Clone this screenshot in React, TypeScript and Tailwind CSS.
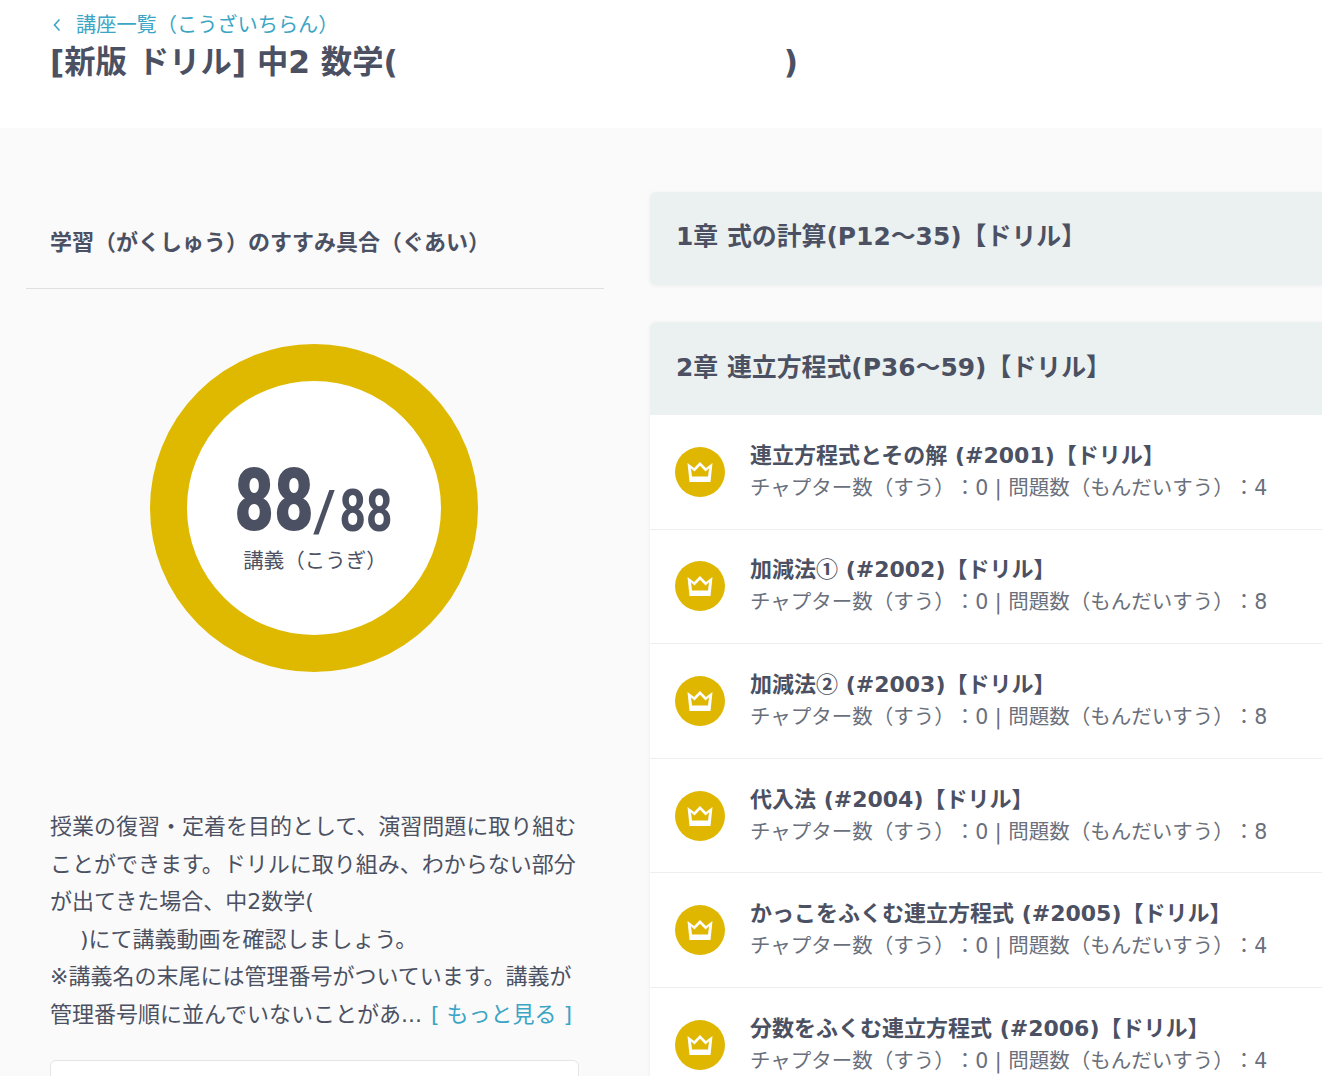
import type { ReactNode } from "react"

const circled = (n: string) => <span className="leading-[0] font-['Noto_Sans_CJK_JP',sans-serif]">{n}</span>

const lectures: { id: number; title: ReactNode; count: number }[] = [
  { id: 2001, title: "連立方程式とその解 (#2001)【ドリル】", count: 4 },
  { id: 2002, title: <>加減法{circled("①")} (#2002)【ドリル】</>, count: 8 },
  { id: 2003, title: <>加減法{circled("②")} (#2003)【ドリル】</>, count: 8 },
  { id: 2004, title: "代入法 (#2004)【ドリル】", count: 8 },
  { id: 2005, title: "かっこをふくむ連立方程式 (#2005)【ドリル】", count: 4 },
  { id: 2006, title: "分数をふくむ連立方程式 (#2006)【ドリル】", count: 4 },
]

function CrownBadge() {
  return (
    <div className="w-[50px] h-[50px] rounded-full bg-[#dfb600] flex items-center justify-center shrink-0">
      <svg width="26" height="20" viewBox="0 0 26 20">
        <path
          fillRule="evenodd"
          fill="#fff"
          d="M0.5 1 L7 6 L13 0 L19 6 L25.5 1 L23.5 20 H2.5 Z M4 6.2 L5 14.5 H21 L22 6.2 L18.5 9.5 L13 3.8 L7.5 9.5 Z"
        />
      </svg>
    </div>
  )
}

export default function App() {
  return (
    <div className="h-[1076px] overflow-hidden bg-[#fafafa] text-[#4b5162] [text-spacing-trim:space-all] font-['DejaVu_Sans','Noto_Sans_CJK_JP',sans-serif]">
      {/* Header */}
      <header className="h-[128px] bg-white pl-[50px] pt-[10px]">
        <a className="flex items-center text-[20.2px] leading-[30px] text-[#3ba5c5]">
          <svg width="14" height="16" viewBox="0 0 14 16" className="mr-[12px]">
            <path d="M9.5 2.5 L4.5 8 L9.5 13.5" fill="none" stroke="#3ba5c5" strokeWidth="1.6" />
          </svg>
          講座一覧（こうざいちらん）
        </a>
        <h1 className="flex text-[31.3px] leading-[44px] font-bold">
          <span>[新版 ドリル] 中2 数学(</span>
          <span className="ml-[386px]">)</span>
        </h1>
      </header>

      <div className="flex">
        {/* Left column */}
        <aside className="w-[650px] shrink-0 pl-[26px] pr-[46px]">
          <div className="h-[161px] pt-[98px] pl-[24px] border-b border-[#dfe0e0]">
            <h2 className="text-[22px] leading-[34px] font-bold">学習（がくしゅう）のすすみ具合（ぐあい）</h2>
          </div>

          <div className="mt-[55px] ml-[124px] w-[328px] h-[328px] rounded-full border-[37px] border-[#dfb900] bg-white flex flex-col items-center">
            <div className="flex items-end h-[92px] mt-[73px] font-['Roboto',sans-serif] font-black">
              <span className="flex justify-center w-[78px] text-[88px] leading-[92px] scale-x-[0.78]">88</span>
              <span className="flex justify-center w-[20px] ml-[2px] text-[58px] leading-[70px] font-medium">/</span>
              <span className="flex justify-center w-[56px] ml-[3px] text-[59px] leading-[70px] font-bold scale-x-[0.78]">88</span>
            </div>
            <p className="ml-[2px] text-[20.5px] leading-[30px]">講義（こうぎ）</p>
          </div>

          <div className="mt-[136px] pl-[24px] w-[564px] text-[22px] leading-[37.5px]">
            <p>授業の復習・定着を目的として、演習問題に取り組む</p>
            <p>ことができます。ドリルに取り組み、わからない部分</p>
            <p>が出てきた場合、中2数学(</p>
            <p className="pl-[30px]">)にて講義動画を確認しましょう。</p>
            <p>※講義名の末尾には管理番号がついています。講義が</p>
            <p className="whitespace-nowrap">
              管理番号順に並んでいないことがあ... <span className="text-[#3ba5c5] ml-[2px]">[ もっと見る ]</span>
            </p>
          </div>

          <div className="mt-[27px] ml-[24px] w-[529px] h-[60px] bg-white border border-[#e4e6e6] rounded-md" />
        </aside>

        {/* Chapters */}
        <main className="flex-1 min-w-0 pt-[64px]">
          <section className="h-[93px] bg-[#ebf0f0] rounded-l-md shadow-[0_1px_4px_rgba(0,0,0,0.06)] pl-[26px] flex items-center">
            <h3 className="text-[24.9px] font-bold -mt-[4px] whitespace-nowrap">1章 式の計算(P12～35)【ドリル】</h3>
          </section>

          <section className="mt-[37px] rounded-l-md bg-white shadow-[0_1px_4px_rgba(0,0,0,0.06)]">
            <div className="h-[93px] bg-[#ebf0f0] rounded-tl-md pl-[26px] flex items-center">
              <h3 className="text-[24.9px] font-bold -mt-[2px] whitespace-nowrap">2章 連立方程式(P36～59)【ドリル】</h3>
            </div>
            {lectures.map((lecture) => (
              <div key={lecture.id} className="h-[114.6px] border-b border-[#eeeeee] pl-[25px] flex items-center gap-[25px]">
                <CrownBadge />
                <div>
                  <p className="text-[22px] leading-[32px] font-bold whitespace-nowrap">{lecture.title}</p>
                  <p className="text-[20.5px] leading-[32px] text-[#6a6f7c] whitespace-nowrap">
                    チャプター数（すう）：0 | 問題数（もんだいすう）：{lecture.count}
                  </p>
                </div>
              </div>
            ))}
          </section>
        </main>
      </div>
    </div>
  )
}
